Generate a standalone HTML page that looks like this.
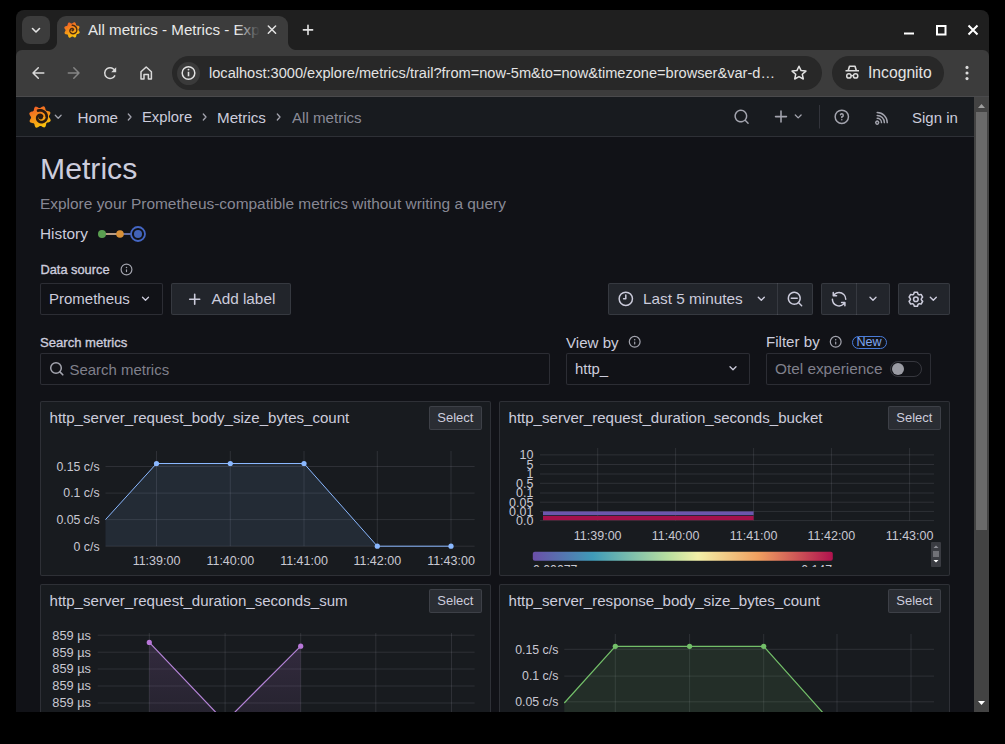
<!DOCTYPE html>
<html><head><meta charset="utf-8">
<style>
*{box-sizing:border-box;margin:0;padding:0}
html,body{width:1005px;height:744px;overflow:hidden;background:#000;font-family:"Liberation Sans",sans-serif}
div,svg{position:absolute}
.t{white-space:nowrap;line-height:1}
svg{overflow:visible}
.btn{background:#22252b;border:1px solid rgba(204,204,220,0.12);border-radius:2px}
.inp{background:#111217;border:1px solid rgba(204,204,220,0.15);border-radius:2px}
.pnl{background:#181b1f;border:1px solid rgba(204,204,220,0.12);border-radius:2px}
.ptitle{font-size:15px;color:#ccccdc}
.sel{background:#2a2d33;border:1px solid rgba(204,204,220,0.12);border-radius:2px;font-size:13px;color:#ccccdc;line-height:22px;text-align:center}
.ax{font-size:12px;color:#c8c8d2;white-space:nowrap;line-height:1}
</style></head><body>
<!-- ============ BROWSER CHROME ============ -->
<div style="left:16px;top:10px;width:973px;height:702px;background:#1f1f1f;border-radius:8px 8px 0 0"></div>
<!-- tab search -->
<!-- active tab -->
<div style="left:57px;top:16px;width:231px;height:36px;background:#3c3c3c;border-radius:9px 9px 0 0"></div>
<div style="left:49px;top:42px;width:8px;height:8px;background:radial-gradient(circle at 0 0,#1f1f1f 7.5px,#3c3c3c 8.5px)"></div>
<div style="left:288px;top:42px;width:8px;height:8px;background:radial-gradient(circle at 100% 0,#1f1f1f 7.5px,#3c3c3c 8.5px)"></div>
<div style="left:22px;top:16px;width:28px;height:28px;background:#3c3c3c;border-radius:8px"></div>
<svg style="left:0;top:0" width="1005" height="97">
 <path d="M32.5 28.5 L36 32 L39.5 28.5" fill="none" stroke="#e3e3e3" stroke-width="1.6" stroke-linecap="round" stroke-linejoin="round"/>
</svg>
<!-- toolbar -->
<div style="left:16px;top:50px;width:973px;height:47px;background:#3c3c3c;border-bottom:1px solid #4a4a4c;border-radius:6px 6px 0 0"></div>
<div style="left:57px;top:44px;width:231px;height:8px;background:#3c3c3c"></div>
<!-- tab favicon -->
<svg style="left:72px;top:30px" width="1" height="1"><defs><linearGradient id="lg1" x1="-6" y1="-11" x2="4" y2="11" gradientUnits="userSpaceOnUse"><stop offset="0" stop-color="#f05a28"/><stop offset="1" stop-color="#fbca0a"/></linearGradient></defs><g transform="scale(0.72)"><path d="M9.0 0.0L9.3 0.6L9.8 1.3L10.3 2.1L10.6 2.9L10.7 3.6L10.4 4.3L9.7 4.8L8.9 5.2L8.1 5.4L7.3 5.6L6.7 5.9L6.3 6.3L6.2 7.0L6.0 7.8L5.8 8.7L5.5 9.5L5.0 10.1L4.3 10.4L3.5 10.3L2.7 10.0L1.9 9.5L1.2 9.1L0.6 8.9L0.0 9.0L-0.6 9.3L-1.3 9.8L-2.1 10.3L-2.9 10.6L-3.6 10.7L-4.3 10.4L-4.8 9.7L-5.2 8.9L-5.4 8.1L-5.6 7.3L-5.9 6.7L-6.3 6.3L-7.0 6.2L-7.8 6.0L-8.7 5.8L-9.5 5.5L-10.1 5.0L-10.4 4.3L-10.3 3.5L-10.0 2.7L-9.5 1.9L-9.1 1.2L-8.9 0.6L-9.0 0.0L-9.3 -0.6L-9.8 -1.3L-10.3 -2.1L-10.6 -2.9L-10.7 -3.6L-10.4 -4.3L-9.7 -4.8L-8.9 -5.2L-8.1 -5.4L-7.3 -5.6L-6.7 -5.9L-6.3 -6.3L-6.2 -7.0L-6.0 -7.8L-5.8 -8.7L-5.5 -9.5L-5.0 -10.1L-4.3 -10.4L-3.5 -10.3L-2.7 -10.0L-1.9 -9.5L-1.2 -9.1L-0.6 -8.9L-0.0 -9.0L0.6 -9.3L1.3 -9.8L2.1 -10.3L2.9 -10.6L3.6 -10.7L4.3 -10.4L4.8 -9.7L5.2 -8.9L5.4 -8.1L5.6 -7.3L5.9 -6.7L6.3 -6.3L7.0 -6.2L7.8 -6.0L8.7 -5.8L9.5 -5.5L10.1 -5.0L10.4 -4.3L10.3 -3.5L10.0 -2.7L9.5 -1.9L9.1 -1.2L8.9 -0.6Z" fill="url(#lg1)"/><circle cx="0.8" cy="0.4" r="1.6" fill="#4a2a14"/><path d="M2.18 -0.76L2.14 -0.87L2.09 -0.98L2.03 -1.09L1.97 -1.19L1.89 -1.30L1.81 -1.40L1.72 -1.49L1.62 -1.58L1.51 -1.67L1.40 -1.75L1.28 -1.83L1.15 -1.89L1.01 -1.95L0.87 -2.01L0.73 -2.05L0.57 -2.08L0.42 -2.11L0.26 -2.12L0.10 -2.13L-0.07 -2.12L-0.23 -2.10L-0.40 -2.08L-0.57 -2.04L-0.74 -1.99L-0.90 -1.93L-1.07 -1.85L-1.23 -1.77L-1.39 -1.67L-1.54 -1.56L-1.69 -1.44L-1.83 -1.31L-1.97 -1.17L-2.10 -1.02L-2.22 -0.86L-2.33 -0.69L-2.43 -0.51L-2.52 -0.33L-2.61 -0.13L-2.67 0.07L-2.73 0.28L-2.78 0.49L-2.81 0.71L-2.82 0.93L-2.83 1.16L-2.82 1.39L-2.79 1.62L-2.75 1.85L-2.70 2.08L-2.63 2.31L-2.55 2.53L-2.45 2.75L-2.33 2.97L-2.20 3.19L-2.06 3.39L-1.90 3.59L-1.73 3.78L-1.55 3.97L-1.35 4.14L-1.14 4.30L-0.92 4.45L-0.69 4.59L-0.44 4.71L-0.19 4.82L0.07 4.91L0.34 4.99L0.61 5.06L0.89 5.10L1.18 5.13L1.47 5.14L1.76 5.14L2.06 5.11L2.35 5.07L2.65 5.01L2.94 4.93L3.23 4.83L3.51 4.71L3.79 4.57L4.07 4.42L4.33 4.25L4.59 4.06L4.83 3.85L5.07 3.63L5.29 3.39L5.50 3.14L5.70 2.87L5.88 2.59L6.04 2.29L6.18 1.98L6.31 1.67L6.42 1.34L6.51 1.01L6.58 0.66L6.63 0.31L6.66 -0.04L6.66 -0.40L6.65 -0.76L6.61 -1.12L6.55 -1.48L6.46 -1.84L6.36 -2.19L6.23 -2.54L6.08 -2.89L5.91 -3.22L5.72 -3.55L5.50 -3.87L5.27 -4.18L5.01 -4.47L4.74 -4.75L4.44 -5.01L4.13 -5.26L3.81 -5.49L3.46 -5.70L3.11 -5.89L2.74 -6.06L2.35 -6.20L1.96 -6.33L1.56 -6.43L1.15 -6.50L0.73 -6.56L0.31 -6.58" fill="none" stroke="#4a2a14" stroke-width="2.0" stroke-linecap="round"/></g></svg>
<div class="t" style="left:88px;top:22px;font-size:15.15px;color:#e8e8e8">All metrics - Metrics - Exp</div>
<div style="left:236px;top:18px;width:28px;height:28px;background:linear-gradient(90deg,rgba(60,60,60,0),#3c3c3c 85%)"></div>
<svg style="left:0;top:0" width="1005" height="97">
 <!-- tab close -->
 <path d="M268.3 26 L275.6 33.3 M275.6 26 L268.3 33.3" stroke="#e3e3e3" stroke-width="1.5" stroke-linecap="round"/>
 <!-- new tab + -->
 <path d="M308 25.3 V34.5 M303.4 29.9 H312.6" stroke="#e3e3e3" stroke-width="1.6" stroke-linecap="round"/>
 <!-- window controls -->
 <path d="M904 33.5 H914" stroke="#fff" stroke-width="2"/>
 <rect x="937" y="26" width="8.5" height="8.5" fill="none" stroke="#fff" stroke-width="2"/>
 <path d="M968.5 25.5 L977.5 34.5 M977.5 25.5 L968.5 34.5" stroke="#fff" stroke-width="2"/>
 <!-- back -->
 <path d="M43.8 73 H33 M38.3 67.8 L33 73 L38.3 78.2" fill="none" stroke="#dadada" stroke-width="1.5" stroke-linecap="round" stroke-linejoin="round"/>
 <!-- forward -->
 <path d="M68.3 73 H79 M73.8 67.8 L79 73 L73.8 78.2" fill="none" stroke="#858585" stroke-width="1.5" stroke-linecap="round" stroke-linejoin="round"/>
 <!-- reload -->
 <path d="M115.2 71.3 A5.4 5.4 0 1 0 115 75.4" fill="none" stroke="#dadada" stroke-width="1.5"/>
 <path d="M116.2 67.3 V72.3 H111.2 Z" fill="#dadada"/>
 <!-- home -->
 <path d="M141 79 V71.8 L146.2 67 L151.4 71.8 V79 H148.4 V74.4 H144 V79 Z" fill="none" stroke="#dadada" stroke-width="1.5" stroke-linejoin="round"/>
</svg>
<!-- omnibox -->
<div style="left:172px;top:56px;width:650px;height:34px;background:#282828;border-radius:17px"></div>
<div style="left:177px;top:61.5px;width:23px;height:23px;background:#3a3a3a;border-radius:12px"></div>
<svg style="left:0;top:0" width="1005" height="97">
 <circle cx="188.5" cy="73" r="6.3" fill="none" stroke="#e3e3e3" stroke-width="1.5"/>
 <path d="M188.5 71.8 V76.3" stroke="#e3e3e3" stroke-width="1.6"/>
 <circle cx="188.5" cy="69.6" r="0.95" fill="#e3e3e3"/>
 <!-- star -->
 <path d="M799 66.2 L801.1 70.6 L805.9 71.1 L802.3 74.3 L803.3 79 L799 76.6 L794.7 79 L795.7 74.3 L792.1 71.1 L796.9 70.6 Z" fill="none" stroke="#e3e3e3" stroke-width="1.5" stroke-linejoin="round"/>
</svg>
<div class="t" style="left:209px;top:66px;font-size:14.58px;color:#e3e3e3">localhost:3000/explore/metrics/trail?from=now-5m&amp;to=now&amp;timezone=browser&amp;var-d…</div>
<!-- incognito pill -->
<div style="left:832px;top:56px;width:112px;height:34px;background:#282828;border-radius:17px"></div>
<svg style="left:0;top:0" width="1005" height="97">
 <path d="M845.5 70.8 H859 M848.2 70.6 L849.5 66.3 H855 L856.3 70.6" fill="none" stroke="#dcdcdc" stroke-width="1.6" stroke-linejoin="round"/>
 <circle cx="848.9" cy="75.9" r="2.2" fill="none" stroke="#dcdcdc" stroke-width="1.5"/>
 <circle cx="855.6" cy="75.9" r="2.2" fill="none" stroke="#dcdcdc" stroke-width="1.5"/>
 <path d="M851 75.6 H853.4" stroke="#dcdcdc" stroke-width="1.3"/>
 <!-- kebab -->
 <circle cx="967" cy="67.4" r="1.55" fill="#dcdcdc"/>
 <circle cx="967" cy="73" r="1.55" fill="#dcdcdc"/>
 <circle cx="967" cy="78.6" r="1.55" fill="#dcdcdc"/>
</svg>
<div class="t" style="left:868px;top:65px;font-size:15.7px;color:#e3e3e3">Incognito</div>

<!-- ============ PAGE ============ -->
<div id="page" style="left:16px;top:97px;width:958px;height:615px;background:#111217;overflow:hidden"></div>
<!-- scrollbar -->
<div style="left:974px;top:97px;width:15px;height:615px;background:#434343"></div>
<div style="left:976px;top:112px;width:11px;height:418px;background:#6a6a6a"></div>
<svg style="left:0;top:0" width="1005" height="744">
 <path d="M978 108 L981.5 104 L985 108 Z" fill="#a0a0a0"/>
 <path d="M978 701 L981.5 705 L985 701 Z" fill="#fff"/>
</svg>

<!-- grafana header -->
<div style="left:16px;top:97px;width:958px;height:40px;background:#181b1f;border-bottom:1px solid rgba(204,204,220,0.12)"></div>

<svg style="left:39.5px;top:116.8px" width="1" height="1"><defs><linearGradient id="lg2" x1="-6" y1="-11" x2="4" y2="11" gradientUnits="userSpaceOnUse"><stop offset="0" stop-color="#f05a28"/><stop offset="1" stop-color="#fbca0a"/></linearGradient></defs><path d="M9.0 0.0L9.3 0.6L9.8 1.3L10.3 2.1L10.6 2.9L10.7 3.6L10.4 4.3L9.7 4.8L8.9 5.2L8.1 5.4L7.3 5.6L6.7 5.9L6.3 6.3L6.2 7.0L6.0 7.8L5.8 8.7L5.5 9.5L5.0 10.1L4.3 10.4L3.5 10.3L2.7 10.0L1.9 9.5L1.2 9.1L0.6 8.9L0.0 9.0L-0.6 9.3L-1.3 9.8L-2.1 10.3L-2.9 10.6L-3.6 10.7L-4.3 10.4L-4.8 9.7L-5.2 8.9L-5.4 8.1L-5.6 7.3L-5.9 6.7L-6.3 6.3L-7.0 6.2L-7.8 6.0L-8.7 5.8L-9.5 5.5L-10.1 5.0L-10.4 4.3L-10.3 3.5L-10.0 2.7L-9.5 1.9L-9.1 1.2L-8.9 0.6L-9.0 0.0L-9.3 -0.6L-9.8 -1.3L-10.3 -2.1L-10.6 -2.9L-10.7 -3.6L-10.4 -4.3L-9.7 -4.8L-8.9 -5.2L-8.1 -5.4L-7.3 -5.6L-6.7 -5.9L-6.3 -6.3L-6.2 -7.0L-6.0 -7.8L-5.8 -8.7L-5.5 -9.5L-5.0 -10.1L-4.3 -10.4L-3.5 -10.3L-2.7 -10.0L-1.9 -9.5L-1.2 -9.1L-0.6 -8.9L-0.0 -9.0L0.6 -9.3L1.3 -9.8L2.1 -10.3L2.9 -10.6L3.6 -10.7L4.3 -10.4L4.8 -9.7L5.2 -8.9L5.4 -8.1L5.6 -7.3L5.9 -6.7L6.3 -6.3L7.0 -6.2L7.8 -6.0L8.7 -5.8L9.5 -5.5L10.1 -5.0L10.4 -4.3L10.3 -3.5L10.0 -2.7L9.5 -1.9L9.1 -1.2L8.9 -0.6Z" fill="url(#lg2)"/><circle cx="0.8" cy="0.4" r="2.1" fill="#2a1a10"/><path d="M2.10 -0.69L2.06 -0.80L2.02 -0.92L1.96 -1.03L1.90 -1.13L1.82 -1.24L1.74 -1.34L1.65 -1.44L1.55 -1.53L1.44 -1.62L1.32 -1.70L1.20 -1.78L1.07 -1.84L0.93 -1.90L0.78 -1.95L0.63 -1.99L0.48 -2.03L0.32 -2.05L0.15 -2.06L-0.02 -2.05L-0.19 -2.04L-0.36 -2.02L-0.53 -1.98L-0.70 -1.93L-0.87 -1.87L-1.04 -1.80L-1.21 -1.71L-1.37 -1.61L-1.53 -1.50L-1.68 -1.38L-1.83 -1.24L-1.97 -1.10L-2.10 -0.94L-2.22 -0.77L-2.33 -0.59L-2.43 -0.41L-2.52 -0.21L-2.60 -0.01L-2.67 0.21L-2.72 0.42L-2.76 0.65L-2.78 0.88L-2.79 1.11L-2.78 1.35L-2.76 1.58L-2.72 1.82L-2.67 2.06L-2.60 2.30L-2.51 2.53L-2.41 2.77L-2.29 2.99L-2.15 3.21L-2.00 3.43L-1.84 3.63L-1.66 3.83L-1.46 4.02L-1.25 4.19L-1.03 4.36L-0.79 4.51L-0.55 4.64L-0.29 4.77L-0.02 4.87L0.26 4.96L0.54 5.03L0.83 5.09L1.13 5.12L1.43 5.14L1.74 5.13L2.04 5.11L2.35 5.07L2.66 5.01L2.97 4.92L3.27 4.82L3.57 4.69L3.86 4.55L4.14 4.38L4.42 4.20L4.68 4.00L4.94 3.78L5.18 3.54L5.41 3.28L5.62 3.01L5.82 2.72L6.00 2.42L6.16 2.10L6.30 1.77L6.42 1.43L6.52 1.08L6.60 0.72L6.65 0.36L6.69 -0.01L6.69 -0.39L6.68 -0.76L6.64 -1.14L6.58 -1.52L6.49 -1.90L6.37 -2.27L6.24 -2.64L6.07 -3.00L5.89 -3.35L5.68 -3.69L5.44 -4.02L5.19 -4.34L4.91 -4.64L4.61 -4.93L4.30 -5.20L3.96 -5.45L3.61 -5.68L3.24 -5.88L2.85 -6.07L2.45 -6.23L2.04 -6.37L1.62 -6.48L1.19 -6.56L0.75 -6.62L0.31 -6.65L-0.14 -6.65L-0.59 -6.62L-1.04 -6.57L-1.49 -6.48L-1.93 -6.37" fill="none" stroke="#2a1a10" stroke-width="2.7" stroke-linecap="round"/></svg>
<svg style="left:0;top:0" width="1005" height="140">
 <path d="M55.3 115.3 L58.2 118.2 L61.1 115.3" fill="none" stroke="#9fa1ab" stroke-width="1.3" stroke-linecap="round" stroke-linejoin="round"/>
 <path d="M128.3 114 L131 117 L128.3 120" fill="none" stroke="#a3a4ae" stroke-width="1.3" stroke-linecap="round" stroke-linejoin="round"/>
 <path d="M203.3 114 L206 117 L203.3 120" fill="none" stroke="#a3a4ae" stroke-width="1.3" stroke-linecap="round" stroke-linejoin="round"/>
 <path d="M277.3 114 L280 117 L277.3 120" fill="none" stroke="#a3a4ae" stroke-width="1.3" stroke-linecap="round" stroke-linejoin="round"/>
 <!-- search -->
 <path transform="translate(732.96 108.16) scale(0.72)" d="M21.71,20.29,18,16.61A9,9,0,1,0,16.61,18l3.68,3.68a1,1,0,0,0,1.42,0A1,1,0,0,0,21.71,20.29ZM11,18a7,7,0,1,1,7-7A7,7,0,0,1,11,18Z" fill="#a3a4ae"/>
 <!-- plus -->
 <path transform="translate(771.64 107.24) scale(0.78)" d="M19,11H13V5a1,1,0,0,0-2,0v6H5a1,1,0,0,0,0,2h6v6a1,1,0,0,0,2,0V13h6a1,1,0,0,0,0-2Z" fill="#a3a4ae"/>
 <path d="M795.3 115 L798.2 117.9 L801.1 115" fill="none" stroke="#a3a4ae" stroke-width="1.3" stroke-linecap="round" stroke-linejoin="round"/>
 <!-- divider -->
 <path d="M819.5 105 V128.5" stroke="rgba(204,204,220,0.15)" stroke-width="1"/>
 <!-- help -->
 <path transform="translate(832.92 107.92) scale(0.74)" d="M11.29,15.29a1.58,1.58,0,0,0-.12.15.76.76,0,0,0-.09.18.64.64,0,0,0-.06.18,1.36,1.36,0,0,0,0,.2.84.84,0,0,0,.08.38.9.9,0,0,0,.54.54.94.94,0,0,0,.76,0,.9.9,0,0,0,.54-.54A1,1,0,0,0,13,16a1,1,0,0,0-.29-.71A1,1,0,0,0,11.29,15.29ZM12,2A10,10,0,1,0,22,12,10,10,0,0,0,12,2Zm0,18a8,8,0,1,1,8-8A8,8,0,0,1,12,20ZM12,7A3,3,0,0,0,9.4,8.5a1,1,0,1,0,1.73,1A1,1,0,0,1,12,9a1,1,0,0,1,0,2,1,1,0,0,0-1,1v1a1,1,0,0,0,2,0v-.18A3,3,0,0,0,12,7Z" fill="#a3a4ae"/>
 <!-- rss -->
 <path transform="translate(873.58 108.96) scale(0.72)" d="M2.88,16.88a3,3,0,1,0,4.24,0A3,3,0,0,0,2.88,16.88Zm2.83,2.830a1,1,0,0,1-1.42-1.42,1,1,0,0,1,1.42,0A1,1,0,0,1,5.71,19.71ZM5,12a1,1,0,0,0,0,2,5,5,0,0,1,5,5,1,1,0,0,0,2,0,7,7,0,0,0-7-7ZM5,8A1,1,0,0,0,5,10a9,9,0,0,1,9,9,1,1,0,0,0,2,0A11.08,11.08,0,0,0,5,8ZM5,4A1,1,0,0,0,5,6,13,13,0,0,1,18,19a1,1,0,0,0,2,0A15,15,0,0,0,5,4Z" fill="#a3a4ae"/>
</svg>
<div class="t" style="left:77.5px;top:110px;font-size:15.2px;color:#ccccdc">Home</div>
<div class="t" style="left:142px;top:110px;font-size:14.8px;color:#ccccdc">Explore</div>
<div class="t" style="left:217px;top:110px;font-size:15.2px;color:#ccccdc">Metrics</div>
<div class="t" style="left:292px;top:110px;font-size:15.1px;color:rgba(204,204,220,0.65)">All metrics</div>
<div class="t" style="left:912px;top:110px;font-size:15px;color:#ccccdc">Sign in</div>

<!-- ============ BODY ============ -->
<div class="t" style="left:40px;top:153.5px;font-size:30.2px;color:#ccccdc">Metrics</div>
<div class="t" style="left:40px;top:196px;font-size:15.45px;color:rgba(204,204,220,0.65)">Explore your Prometheus-compatible metrics without writing a query</div>
<div class="t" style="left:40px;top:226px;font-size:15.4px;color:#ccccdc">History</div>
<svg style="left:0;top:0" width="1005" height="744">
 <path d="M102 234 H132" stroke="#7786c8" stroke-width="1.6"/>
 <path d="M102 234 H120" stroke="#cfa77a" stroke-width="1.6"/>
 <circle cx="102" cy="234" r="4" fill="#5a9e50"/>
 <circle cx="120" cy="234" r="3.8" fill="#d89038"/>
 <circle cx="138" cy="234" r="7" fill="#111217" stroke="#4466c4" stroke-width="1.8"/>
 <circle cx="138" cy="234" r="4" fill="#4263b8"/>
 <!-- data source info -->
 <path transform="translate(119.30 262.30) scale(0.6)" d="M12,2A10,10,0,1,0,22,12,10,10,0,0,0,12,2Zm0,18a8,8,0,1,1,8-8A8,8,0,0,1,12,20Zm0-8.5a1,1,0,0,0-1,1v3a1,1,0,0,0,2,0v-3A1,1,0,0,0,12,11.5Zm0-4a1.25,1.25,0,1,0,1.25,1.25A1.25,1.25,0,0,0,12,7.5Z" fill="#a3a4ae"/>
</svg>
<div class="t" style="left:40.5px;top:263.5px;font-size:12.8px;color:#ccccdc;-webkit-text-stroke:0.35px #ccccdc">Data source</div>
<!-- prometheus select -->
<div class="inp" style="left:40px;top:283px;width:123px;height:32px"></div>
<div class="t" style="left:49px;top:291px;font-size:15px;color:#ccccdc">Prometheus</div>
<!-- add label -->
<div class="btn" style="left:171px;top:283px;width:120px;height:32px"></div>
<div class="t" style="left:211.5px;top:290.8px;font-size:15.3px;color:#ccccdc">Add label</div>
<!-- time picker -->
<div class="btn" style="left:608px;top:283px;width:205px;height:32px"></div>
<div style="left:777px;top:283px;width:1px;height:32px;background:rgba(204,204,220,0.12)"></div>
<div class="t" style="left:643px;top:291px;font-size:15.35px;color:#ccccdc">Last 5 minutes</div>
<div class="btn" style="left:821px;top:283px;width:69px;height:32px"></div>
<div style="left:856px;top:283px;width:1px;height:32px;background:rgba(204,204,220,0.12)"></div>
<div class="btn" style="left:898px;top:283px;width:52px;height:32px"></div>
<svg style="left:0;top:0" width="1005" height="744">
 <path d="M142.5 297.2 L145.5 300.2 L148.5 297.2" fill="none" stroke="#ccccdc" stroke-width="1.3" stroke-linecap="round" stroke-linejoin="round"/>
 <path d="M194.7 294.3 V304.3 M189.7 299.3 H199.7" stroke="#ccccdc" stroke-width="1.6" stroke-linecap="round"/>
 <!-- clock -->
 <path transform="translate(616.92 289.92) scale(0.74)" d="M12,2A10,10,0,1,0,22,12,10.01114,10.01114,0,0,0,12,2Zm0,18a8,8,0,1,1,8-8A8.00917,8.00917,0,0,1,12,20ZM12,6a.99974.99974,0,0,0-1,1v4H9a1,1,0,0,0,0,2h3a.99974.99974,0,0,0,1-1V7A.99974.99974,0,0,0,12,6Z" fill="#ccccdc"/>
 <path d="M758.3 297.2 L761.3 300.2 L764.3 297.2" fill="none" stroke="#ccccdc" stroke-width="1.4" stroke-linecap="round" stroke-linejoin="round"/>
 <!-- zoom out -->
 <path transform="translate(786.12 290.12) scale(0.74)" d="M21.71,20.29,18,16.61A9,9,0,1,0,16.61,18l3.68,3.68a1,1,0,0,0,1.42,0A1,1,0,0,0,21.71,20.29ZM11,18a7,7,0,1,1,7-7A7,7,0,0,1,11,18Zm4-8H7a1,1,0,0,0,0,2h8a1,1,0,0,0,0-2Z" fill="#ccccdc"/>
 <!-- refresh -->
 <path transform="translate(830.2 290.3) scale(0.74)" d="M19.91,15.51H15.38a1,1,0,0,0,0,2h2.4A8,8,0,0,1,4,12a1,1,0,0,0-2,0,10,10,0,0,0,16.88,7.23V21a1,1,0,0,0,2,0V16.5A1,1,0,0,0,19.91,15.51ZM12,2A10,10,0,0,0,5.12,4.77V3a1,1,0,0,0-2,0V7.5a1,1,0,0,0,1,1h4.5a1,1,0,0,0,0-2H6.22A8,8,0,0,1,20,12a1,1,0,0,0,2,0A10,10,0,0,0,12,2Z" fill="#ccccdc"/>
 <path d="M870 297.2 L873 300.2 L876 297.2" fill="none" stroke="#ccccdc" stroke-width="1.4" stroke-linecap="round" stroke-linejoin="round"/>
 <!-- gear -->
 <path transform="translate(906.9 290) scale(0.77)" d="M19.9,12.66a1,1,0,0,1,0-1.32L21.18,9.9a1,1,0,0,0,.12-1.17l-2-3.46a1,1,0,0,0-1.07-.48l-1.88.38a1,1,0,0,1-1.15-.66l-.61-1.83A1,1,0,0,0,13.64,2h-4a1,1,0,0,0-1,.68L8.08,4.51a1,1,0,0,1-1.15.66L5,4.79A1,1,0,0,0,4,5.27L2,8.73A1,1,0,0,0,2.1,9.9l1.27,1.44a1,1,0,0,1,0,1.32L2.1,14.1A1,1,0,0,0,2,15.27l2,3.46a1,1,0,0,0,1.07.48l1.88-.38a1,1,0,0,1,1.15.66l.61,1.83a1,1,0,0,0,1,.68h4a1,1,0,0,0,.95-.68l.61-1.83a1,1,0,0,1,1.15-.66l1.88.38a1,1,0,0,0,1.07-.48l2-3.46a1,1,0,0,0-.12-1.17ZM18.41,14l.8.9-1.28,2.22-1.18-.24a3,3,0,0,0-3.45,2L12.92,20H10.36L10,18.86a3,3,0,0,0-3.45-2l-1.18.24L4.07,14.890l.8-.9a3,3,0,0,0,0-4l-.8-.9L5.35,6.89l1.18.24a3,3,0,0,0,3.45-2L10.36,4h2.56l.38,1.14a3,3,0,0,0,3.45,2l1.18-.24,1.28,2.22-.8.9A3,3,0,0,0,18.41,14ZM11.64,8a4,4,0,1,0,4,4A4,4,0,0,0,11.64,8Zm0,6a2,2,0,1,1,2-2A2,2,0,0,1,11.64,14Z" fill="#ccccdc"/>
 <path d="M930.3 297.2 L933.3 300.2 L936.3 297.2" fill="none" stroke="#ccccdc" stroke-width="1.4" stroke-linecap="round" stroke-linejoin="round"/>
</svg>

<!-- search row -->
<div class="t" style="left:40px;top:335.5px;font-size:13.1px;color:#ccccdc;-webkit-text-stroke:0.35px #ccccdc">Search metrics</div>
<div class="inp" style="left:40px;top:353px;width:510px;height:32px"></div>
<div class="t" style="left:69.5px;top:363px;font-size:14.95px;color:rgba(204,204,220,0.6)">Search metrics</div>
<div class="t" style="left:566px;top:335px;font-size:15.1px;color:#ccccdc">View by</div>
<div class="inp" style="left:566px;top:353px;width:184px;height:32px"></div>
<div class="t" style="left:575px;top:362px;font-size:14.9px;color:#ccccdc">http_</div>
<div class="t" style="left:766px;top:334px;font-size:15.1px;color:#ccccdc">Filter by</div>
<div style="left:852px;top:335.5px;width:35px;height:13.5px;border:1px solid #4a7bd8;border-radius:7px"></div>
<div class="t" style="left:856.5px;top:336px;font-size:12.6px;color:#7ea6f2">New</div>
<div class="inp" style="left:766px;top:353px;width:165px;height:32px"></div>
<div class="t" style="left:775px;top:361px;font-size:15.35px;color:rgba(204,204,220,0.6)">Otel experience</div>
<div style="left:889.5px;top:361px;width:32.5px;height:16px;border:1px solid rgba(204,204,220,0.2);border-radius:8px"></div>
<svg style="left:0;top:0" width="1005" height="744">
 <circle cx="56" cy="368" r="5.3" fill="none" stroke="#a3a4ae" stroke-width="1.5"/>
 <path d="M59.9 371.9 L62.8 374.8" stroke="#a3a4ae" stroke-width="1.6" stroke-linecap="round"/>
 <path transform="translate(627.50 334.60) scale(0.6)" d="M12,2A10,10,0,1,0,22,12,10,10,0,0,0,12,2Zm0,18a8,8,0,1,1,8-8A8,8,0,0,1,12,20Zm0-8.5a1,1,0,0,0-1,1v3a1,1,0,0,0,2,0v-3A1,1,0,0,0,12,11.5Zm0-4a1.25,1.25,0,1,0,1.25,1.25A1.25,1.25,0,0,0,12,7.5Z" fill="#a3a4ae"/>
 <path transform="translate(828.50 334.60) scale(0.6)" d="M12,2A10,10,0,1,0,22,12,10,10,0,0,0,12,2Zm0,18a8,8,0,1,1,8-8A8,8,0,0,1,12,20Zm0-8.5a1,1,0,0,0-1,1v3a1,1,0,0,0,2,0v-3A1,1,0,0,0,12,11.5Zm0-4a1.25,1.25,0,1,0,1.25,1.25A1.25,1.25,0,0,0,12,7.5Z" fill="#a3a4ae"/>
 <path d="M730 366.7 L733 369.7 L736 366.7" fill="none" stroke="#ccccdc" stroke-width="1.3" stroke-linecap="round" stroke-linejoin="round"/>
 <circle cx="898" cy="369" r="6" fill="#9a9ba3"/>
</svg>















<!-- ============ PANELS ============ -->
<div class="pnl" style="left:40px;top:401px;width:451px;height:175px"></div>
<div class="t ptitle" style="left:49.5px;top:410px;font-size:15.07px">http_server_request_body_size_bytes_count</div>
<div class="sel" style="left:428.7px;top:406px;width:53.3px;height:24px">Select</div>
<div class="pnl" style="left:499px;top:401px;width:451px;height:175px"></div>
<div class="t ptitle" style="left:508.5px;top:410px;font-size:15.07px">http_server_request_duration_seconds_bucket</div>
<div class="sel" style="left:887.7px;top:406px;width:53.3px;height:24px">Select</div>
<div class="pnl" style="left:40px;top:584px;width:451px;height:175px"></div>
<div class="t ptitle" style="left:49.5px;top:593px;font-size:15.07px">http_server_request_duration_seconds_sum</div>
<div class="sel" style="left:428.7px;top:589px;width:53.3px;height:24px">Select</div>
<div class="pnl" style="left:499px;top:584px;width:451px;height:175px"></div>
<div class="t ptitle" style="left:508.5px;top:593px;font-size:15.07px">http_server_response_body_size_bytes_count</div>
<div class="sel" style="left:887.7px;top:589px;width:53.3px;height:24px">Select</div>
<svg style="left:0;top:0;overflow:hidden" width="1005" height="712" font-family="Liberation Sans"><path d="M105.5 466.5 L474.6 466.5" stroke="rgba(204,204,220,0.12)" stroke-width="1"/><text x="99.6" y="470.8" text-anchor="end" font-size="12.3" fill="#c8c8d2">0.15 c/s</text><path d="M105.5 493.1 L474.6 493.1" stroke="rgba(204,204,220,0.12)" stroke-width="1"/><text x="99.6" y="497.40000000000003" text-anchor="end" font-size="12.3" fill="#c8c8d2">0.1 c/s</text><path d="M105.5 519.6 L474.6 519.6" stroke="rgba(204,204,220,0.12)" stroke-width="1"/><text x="99.6" y="523.9" text-anchor="end" font-size="12.3" fill="#c8c8d2">0.05 c/s</text><path d="M105.5 546.2 L474.6 546.2" stroke="rgba(204,204,220,0.12)" stroke-width="1"/><text x="99.6" y="550.5" text-anchor="end" font-size="12.3" fill="#c8c8d2">0 c/s</text><path d="M156.5 451 L156.5 546.2" stroke="rgba(204,204,220,0.12)" stroke-width="1"/><text x="156.5" y="564.8" text-anchor="middle" font-size="12.5" fill="#c8c8d2">11:39:00</text><path d="M230.3 451 L230.3 546.2" stroke="rgba(204,204,220,0.12)" stroke-width="1"/><text x="230.3" y="564.8" text-anchor="middle" font-size="12.5" fill="#c8c8d2">11:40:00</text><path d="M304 451 L304 546.2" stroke="rgba(204,204,220,0.12)" stroke-width="1"/><text x="304" y="564.8" text-anchor="middle" font-size="12.5" fill="#c8c8d2">11:41:00</text><path d="M377.3 451 L377.3 546.2" stroke="rgba(204,204,220,0.12)" stroke-width="1"/><text x="377.3" y="564.8" text-anchor="middle" font-size="12.5" fill="#c8c8d2">11:42:00</text><path d="M451 451 L451 546.2" stroke="rgba(204,204,220,0.12)" stroke-width="1"/><text x="451" y="564.8" text-anchor="middle" font-size="12.5" fill="#c8c8d2">11:43:00</text><path d="M105.5 519.6 L156.5 463.5 L230.3 463.5 L304 463.5 L377.3 546.2 L451 546.2 L451 546.2 L105.5 546.2 Z" fill="rgba(138,184,255,0.10)"/><path d="M105.5 519.6 L156.5 463.5 L230.3 463.5 L304 463.5 L377.3 546.2 L451 546.2" fill="none" stroke="#8ab8ff" stroke-width="1"/><circle cx="156.5" cy="463.5" r="2.6" fill="#8ab8ff"/><circle cx="230.3" cy="463.5" r="2.6" fill="#8ab8ff"/><circle cx="304" cy="463.5" r="2.6" fill="#8ab8ff"/><circle cx="377.3" cy="546.2" r="2.6" fill="#8ab8ff"/><circle cx="451" cy="546.2" r="2.6" fill="#8ab8ff"/><path d="M540 454.9 L934 454.9" stroke="rgba(204,204,220,0.12)" stroke-width="1"/><text x="533.4" y="459.2" text-anchor="end" font-size="12.5" fill="#c8c8d2">10</text><path d="M540 464.5 L934 464.5" stroke="rgba(204,204,220,0.12)" stroke-width="1"/><text x="533.4" y="468.8" text-anchor="end" font-size="12.5" fill="#c8c8d2">5</text><path d="M540 474 L934 474" stroke="rgba(204,204,220,0.12)" stroke-width="1"/><text x="533.4" y="478.3" text-anchor="end" font-size="12.5" fill="#c8c8d2">1</text><path d="M540 483.3 L934 483.3" stroke="rgba(204,204,220,0.12)" stroke-width="1"/><text x="533.4" y="487.6" text-anchor="end" font-size="12.5" fill="#c8c8d2">0.5</text><path d="M540 493 L934 493" stroke="rgba(204,204,220,0.12)" stroke-width="1"/><text x="533.4" y="497.3" text-anchor="end" font-size="12.5" fill="#c8c8d2">0.1</text><path d="M540 502.2 L934 502.2" stroke="rgba(204,204,220,0.12)" stroke-width="1"/><text x="533.4" y="506.5" text-anchor="end" font-size="12.5" fill="#c8c8d2">0.05</text><path d="M540 511.4 L934 511.4" stroke="rgba(204,204,220,0.12)" stroke-width="1"/><text x="533.4" y="515.6999999999999" text-anchor="end" font-size="12.5" fill="#c8c8d2">0.01</text><path d="M540 520.6 L934 520.6" stroke="rgba(204,204,220,0.12)" stroke-width="1"/><text x="533.4" y="524.9" text-anchor="end" font-size="12.5" fill="#c8c8d2">0.0</text><path d="M597.7 448 L597.7 520.6" stroke="rgba(204,204,220,0.12)" stroke-width="1"/><text x="597.7" y="539.8" text-anchor="middle" font-size="12.5" fill="#c8c8d2">11:39:00</text><path d="M675.6 448 L675.6 520.6" stroke="rgba(204,204,220,0.12)" stroke-width="1"/><text x="675.6" y="539.8" text-anchor="middle" font-size="12.5" fill="#c8c8d2">11:40:00</text><path d="M753.6 448 L753.6 520.6" stroke="rgba(204,204,220,0.12)" stroke-width="1"/><text x="753.6" y="539.8" text-anchor="middle" font-size="12.5" fill="#c8c8d2">11:41:00</text><path d="M831.4 448 L831.4 520.6" stroke="rgba(204,204,220,0.12)" stroke-width="1"/><text x="831.4" y="539.8" text-anchor="middle" font-size="12.5" fill="#c8c8d2">11:42:00</text><path d="M909.6 448 L909.6 520.6" stroke="rgba(204,204,220,0.12)" stroke-width="1"/><text x="909.6" y="539.8" text-anchor="middle" font-size="12.5" fill="#c8c8d2">11:43:00</text><rect x="543" y="511.4" width="210.6" height="3.8" fill="#6c57ad"/><rect x="543" y="516" width="210.6" height="4.2" fill="#a5114b"/><defs><linearGradient id="hm" x1="0" x2="1"><stop offset="0" stop-color="#6b4fa8"/><stop offset="0.2" stop-color="#3f9bb8"/><stop offset="0.45" stop-color="#b8e0a0"/><stop offset="0.55" stop-color="#f2f0a8"/><stop offset="0.75" stop-color="#f0a060"/><stop offset="1" stop-color="#b0124e"/></linearGradient><clipPath id="cp2"><rect x="500" y="540" width="449" height="27"/></clipPath></defs><rect x="532.8" y="551.8" width="300" height="9" rx="2" fill="url(#hm)"/><g clip-path="url(#cp2)"><text x="533" y="574" text-anchor="start" font-size="12.3" fill="#c8c8d2">0.00077</text><text x="832" y="574" text-anchor="end" font-size="12.3" fill="#c8c8d2">0.147</text></g><rect x="931" y="542" width="10" height="25" rx="1" fill="#3a3c42"/><path d="M933.5 548 L936 545.5 L938.5 548 Z" fill="#8e8f96"/><rect x="933" y="551" width="6" height="6" fill="#707177"/><path d="M933.5 560 L936 562.5 L938.5 560 Z" fill="#fff"/><path d="M97.7 635.2 L474.6 635.2" stroke="rgba(204,204,220,0.12)" stroke-width="1"/><text x="91" y="639.5" text-anchor="end" font-size="12.8" fill="#c8c8d2">859 µs</text><path d="M97.7 652.2 L474.6 652.2" stroke="rgba(204,204,220,0.12)" stroke-width="1"/><text x="91" y="656.5" text-anchor="end" font-size="12.8" fill="#c8c8d2">859 µs</text><path d="M97.7 669 L474.6 669" stroke="rgba(204,204,220,0.12)" stroke-width="1"/><text x="91" y="673.3" text-anchor="end" font-size="12.8" fill="#c8c8d2">859 µs</text><path d="M97.7 686 L474.6 686" stroke="rgba(204,204,220,0.12)" stroke-width="1"/><text x="91" y="690.3" text-anchor="end" font-size="12.8" fill="#c8c8d2">859 µs</text><path d="M97.7 703 L474.6 703" stroke="rgba(204,204,220,0.12)" stroke-width="1"/><text x="91" y="707.3" text-anchor="end" font-size="12.8" fill="#c8c8d2">859 µs</text><path d="M149.3 633 L149.3 712" stroke="rgba(204,204,220,0.12)" stroke-width="1"/><path d="M225.1 633 L225.1 712" stroke="rgba(204,204,220,0.12)" stroke-width="1"/><path d="M300.7 633 L300.7 712" stroke="rgba(204,204,220,0.12)" stroke-width="1"/><path d="M375.8 633 L375.8 712" stroke="rgba(204,204,220,0.12)" stroke-width="1"/><path d="M451.5 633 L451.5 712" stroke="rgba(204,204,220,0.12)" stroke-width="1"/><defs><linearGradient id="pg" x1="0" y1="0" x2="0" y2="1"><stop offset="0" stop-color="rgba(184,119,217,0.17)"/><stop offset="1" stop-color="rgba(184,119,217,0.07)"/></linearGradient></defs><path d="M149.3 642.4 L225 722 L300.7 646.2 L300.7 730 L149.3 730 Z" fill="url(#pg)"/><path d="M149.3 642.4 L225 722 L300.7 646.2" fill="none" stroke="#b584d8" stroke-width="1.2"/><circle cx="149.3" cy="642.4" r="2.6" fill="#b877d9"/><circle cx="300.7" cy="646.2" r="2.6" fill="#b877d9"/><path d="M564.3 649.3 L934 649.3" stroke="rgba(204,204,220,0.12)" stroke-width="1"/><text x="558.3" y="653.5999999999999" text-anchor="end" font-size="12.3" fill="#c8c8d2">0.15 c/s</text><path d="M564.3 676.1 L934 676.1" stroke="rgba(204,204,220,0.12)" stroke-width="1"/><text x="558.3" y="680.4" text-anchor="end" font-size="12.3" fill="#c8c8d2">0.1 c/s</text><path d="M564.3 701.8 L934 701.8" stroke="rgba(204,204,220,0.12)" stroke-width="1"/><text x="558.3" y="706.0999999999999" text-anchor="end" font-size="12.3" fill="#c8c8d2">0.05 c/s</text><path d="M564.3 728.5 L934 728.5" stroke="rgba(204,204,220,0.12)" stroke-width="1"/><text x="558.3" y="732.8" text-anchor="end" font-size="12.3" fill="#c8c8d2">0 c/s</text><path d="M615.3 634 L615.3 712" stroke="rgba(204,204,220,0.12)" stroke-width="1"/><path d="M689.6 634 L689.6 712" stroke="rgba(204,204,220,0.12)" stroke-width="1"/><path d="M763.7 634 L763.7 712" stroke="rgba(204,204,220,0.12)" stroke-width="1"/><path d="M837 634 L837 712" stroke="rgba(204,204,220,0.12)" stroke-width="1"/><path d="M911 634 L911 712" stroke="rgba(204,204,220,0.12)" stroke-width="1"/><path d="M564.3 703 L615.3 646.3 L689.6 646.3 L763.7 646.3 L837 728.5 L911 728.5 L911 728.5 L564.3 728.5 Z" fill="rgba(115,191,105,0.12)"/><path d="M564.3 703 L615.3 646.3 L689.6 646.3 L763.7 646.3 L837 728.5 L911 728.5" fill="none" stroke="#73bf69" stroke-width="1.2"/><circle cx="615.3" cy="646.3" r="2.6" fill="#73bf69"/><circle cx="689.6" cy="646.3" r="2.6" fill="#73bf69"/><circle cx="763.7" cy="646.3" r="2.6" fill="#73bf69"/></svg>
<div style="left:0;top:712px;width:1005px;height:32px;background:#000"></div>
<!-- ============ END PANELS ============ -->
</body></html>
